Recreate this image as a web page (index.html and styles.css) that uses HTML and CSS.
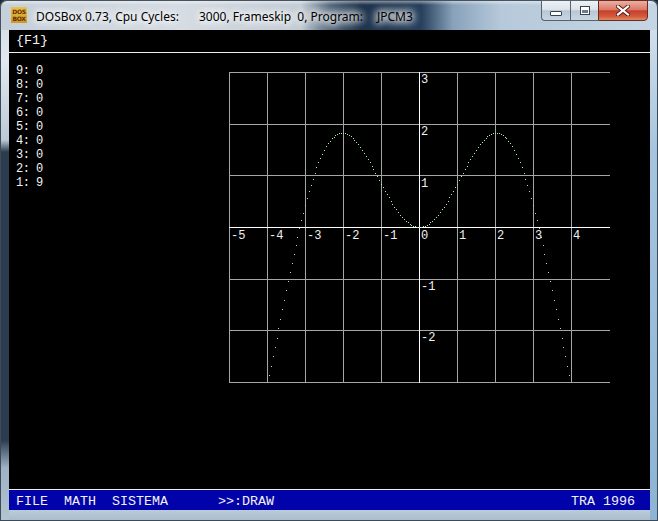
FILE: index.html
```html
<!DOCTYPE html>
<html>
<head>
<meta charset="utf-8">
<link rel="stylesheet" href="styles.css">
</head>
<body>
<div class="window">
  <div class="titlebar">
    <div class="appicon"><span>DOS</span><span>BOX</span></div>
    <div class="title"><span class="t1">DOSBox 0.73, Cpu Cycles:</span><span class="t2">3000, Frameskip&nbsp; 0, Program:</span><span class="t3">JPCM3</span></div>
    <div class="controls">
      <div class="btn min"><span class="min-glyph"></span></div>
      <div class="btn max"><span class="max-glyph"></span></div>
      <div class="btn close">
        <svg class="x-glyph" width="14" height="11" viewBox="0 0 14 11">
          <path d="M2 1.5 L12 9.5 M12 1.5 L2 9.5" stroke="#5a1810" stroke-width="4" stroke-linecap="square"/>
          <path d="M2 1.5 L12 9.5 M12 1.5 L2 9.5" stroke="#ffffff" stroke-width="2.2" stroke-linecap="square"/>
        </svg>
      </div>
    </div>
  </div>
  <div class="client">
    <div class="topline">{F1}</div>
    <div class="main">
      <div class="regs">
        <div class="reg">9: 0</div>
        <div class="reg">8: 0</div>
        <div class="reg">7: 0</div>
        <div class="reg">6: 0</div>
        <div class="reg">5: 0</div>
        <div class="reg">4: 0</div>
        <div class="reg">3: 0</div>
        <div class="reg">2: 0</div>
        <div class="reg">1: 9</div>
      </div>
      <svg class="graph" width="400" height="316" viewBox="0 0 400 316">
        <g class="grid">
          <path d="M0.5 0 V310.5 M38.5 0 V310.5 M76.5 0 V310.5 M114.5 0 V310.5 M152.5 0 V310.5 M228.5 0 V310.5 M266.5 0 V310.5 M304.5 0 V310.5 M342.5 0 V310.5"/>
          <path d="M0 0.5 H381 M0 52.5 H381 M0 103.5 H381 M0 207.5 H381 M0 258.5 H381 M0 310.5 H381"/>
        </g>
        <g class="axis">
          <path d="M190.5 0 V311 M0 155.5 H381"/>
        </g>
        <g class="labels">
          <text x="2" y="167">-5</text>
          <text x="40" y="167">-4</text>
          <text x="78" y="167">-3</text>
          <text x="116" y="167">-2</text>
          <text x="154" y="167">-1</text>
          <text x="192" y="167">0</text>
          <text x="230" y="167">1</text>
          <text x="268" y="167">2</text>
          <text x="306" y="167">3</text>
          <text x="344" y="167">4</text>
          <text x="192" y="11">3</text>
          <text x="192" y="63">2</text>
          <text x="192" y="115">1</text>
          <text x="192" y="218">-1</text>
          <text x="192" y="269">-2</text>
        </g>
        <g id="curve" class="curve"></g>
      </svg>
    </div>
    <div class="menubar">
      <span class="m-left">FILE&nbsp; MATH&nbsp; SISTEMA</span>
      <span class="m-draw">&gt;&gt;:DRAW</span>
      <span class="m-right">TRA 1996</span>
    </div>
  </div>
</div>
<script src="script.js"></script>
</body>
</html>
```

FILE: styles.css
```css
* { box-sizing: border-box; margin: 0; padding: 0; }
html, body { width: 658px; height: 521px; overflow: hidden; background: #1e2b38; }

.window {
  width: 658px;
  height: 521px;
  display: flex;
  flex-direction: column;
  padding: 0 8px 11px 9px;
  border-radius: 7px 7px 0 0;
  box-shadow: inset 0 0 0 1px #3d4a57;
  background:
    linear-gradient(to bottom, #cdd7e1 0, #e2e9ef 60px, #bccad7 140px, #2b3c4e 152px, #2b3c4e 440px, #9fb3c5 468px, #b3c3d1 100%) left top / 9px 100% no-repeat,
    linear-gradient(to bottom, #dae5ee 0, #a6c4de 150px, #8db4d4 100%) right top / 8px 100% no-repeat,
    linear-gradient(to bottom, #bccbd8, #a9bccb) left bottom / 100% 11px no-repeat,
    #b6c6d4;
}

.titlebar {
  height: 30px;
  margin: 0 -8px 0 -9px;
  display: flex;
  align-items: flex-start;
  padding: 0 9px 0 10px;
  border-radius: 7px 7px 0 0;
  border: 1px solid #46525e;
  border-bottom: none;
  background:
    linear-gradient(to bottom, rgba(255,255,255,0.45) 0, rgba(255,255,255,0) 4px),
    linear-gradient(to right, #c6d0da 0, #d5dce3 180px, #c3ccd5 300px, #52667c 330px, #1f344c 360px, #253f5c 420px, #88a2ba 452px, #b6c9da 500px, #c6d5e3 100%);
}

.appicon {
  width: 16px;
  height: 16px;
  margin-top: 6px;
  background: linear-gradient(#e8c24a, #c99a22);
  display: flex;
  flex-direction: column;
  align-items: center;
  justify-content: center;
  font-family: "DejaVu Sans", sans-serif;
  font-size: 6px;
  font-weight: bold;
  line-height: 7px;
  color: #6a2a00;
  letter-spacing: -0.3px;
}

.title {
  margin-left: 9px;
  height: 29px;
  display: flex;
  align-items: center;
  padding-top: 1px;
  font-family: "Noto Sans", "Open Sans", sans-serif;
  font-size: 12px;
  color: #000;
  white-space: nowrap;
  text-shadow: 0 0 6px #fff, 0 0 8px #fff, 0 0 10px #fff, 0 0 12px rgba(255,255,255,0.9);
}
.t1 { display: inline-block; width: 163px; }
.t2 { display: inline-block; width: 178px; }
.t3 { display: inline-block; }

.controls {
  margin-left: auto;
  display: flex;
  height: 21px;
  margin-top: -1px;
}
.btn {
  height: 21px;
  border: 1px solid #55636f;
  display: flex;
  align-items: center;
  justify-content: center;
  background: linear-gradient(to bottom, #eef2f6 0, #dbe3ea 45%, #b9c7d4 52%, #c9d6e2 100%);
}
.min { width: 29px; border-radius: 0 0 0 4px; border-right: none; }
.max { width: 28px; border-right: none; }
.close {
  width: 50px;
  border-radius: 0 0 4px 0;
  border-color: #6a2a22;
  background: linear-gradient(to bottom, #eab0a4 0, #dc7a68 45%, #c8402a 52%, #d0583e 80%, #e28a60 100%);
}
.min-glyph {
  width: 12px;
  height: 5px;
  margin-top: 5px;
  background: #fff;
  border: 1px solid #36434f;
  border-radius: 1px;
}
.max-glyph {
  width: 10px;
  height: 9px;
  border: 1px solid #36434f;
  box-shadow: inset 0 0 0 1px #fff, inset 0 2px 0 1px #fff;
  background: #6c7c8c;
}
.x-glyph { display: block; }

.client {
  width: 641px;
  height: 480px;
  background: #000;
  display: flex;
  flex-direction: column;
  color: #f2f2f2;
  font-family: "Liberation Mono", "DejaVu Sans Mono", monospace;
}

.topline {
  height: 23px;
  border-bottom: 1px solid #f0f0f0;
  padding: 1px 0 0 7px;
  font-size: 13.33px;
  line-height: 20px;
}

.main {
  flex: 1;
  display: flex;
}

.regs {
  width: 220px;
  padding: 11px 0 0 7px;
  font-size: 12px;
  line-height: 14px;
  letter-spacing: -0.53px;
}
.reg { height: 14px; }

.graph {
  margin-top: 19px;
  display: block;
  overflow: visible;
}
.grid path { stroke: #a6a6a6; stroke-width: 1; fill: none; shape-rendering: crispEdges; }
.axis path { stroke: #ffffff; stroke-width: 1; fill: none; shape-rendering: crispEdges; }
.labels text {
  fill: #f0f0f0;
  font-family: "Liberation Mono", "DejaVu Sans Mono", monospace;
  font-size: 12px;
}
.curve rect { fill: #a4f0a4; shape-rendering: crispEdges; }

.menubar {
  height: 21px;
  border-top: 1px solid #f0f0f0;
  background: #0202aa;
  display: flex;
  padding: 4px 15px 0 7px;
  font-size: 13.33px;
  line-height: 16px;
  white-space: pre;
}
.m-draw { margin-left: 50px; }
.m-right { margin-left: auto; }
```

FILE: script.js
```js
(function () {
  var g = document.getElementById('curve');
  var ns = 'http://www.w3.org/2000/svg';
  for (var i = -79; i <= 79; i++) {
    var x = i * 0.05;
    var y = x * Math.sin(x);
    var px = Math.round(190 + x * 38);
    var py = Math.round(155 - y * 51.667);
    var r = document.createElementNS(ns, 'rect');
    r.setAttribute('x', px);
    r.setAttribute('y', py);
    r.setAttribute('width', 1);
    r.setAttribute('height', 1);
    g.appendChild(r);
  }
})();
```
